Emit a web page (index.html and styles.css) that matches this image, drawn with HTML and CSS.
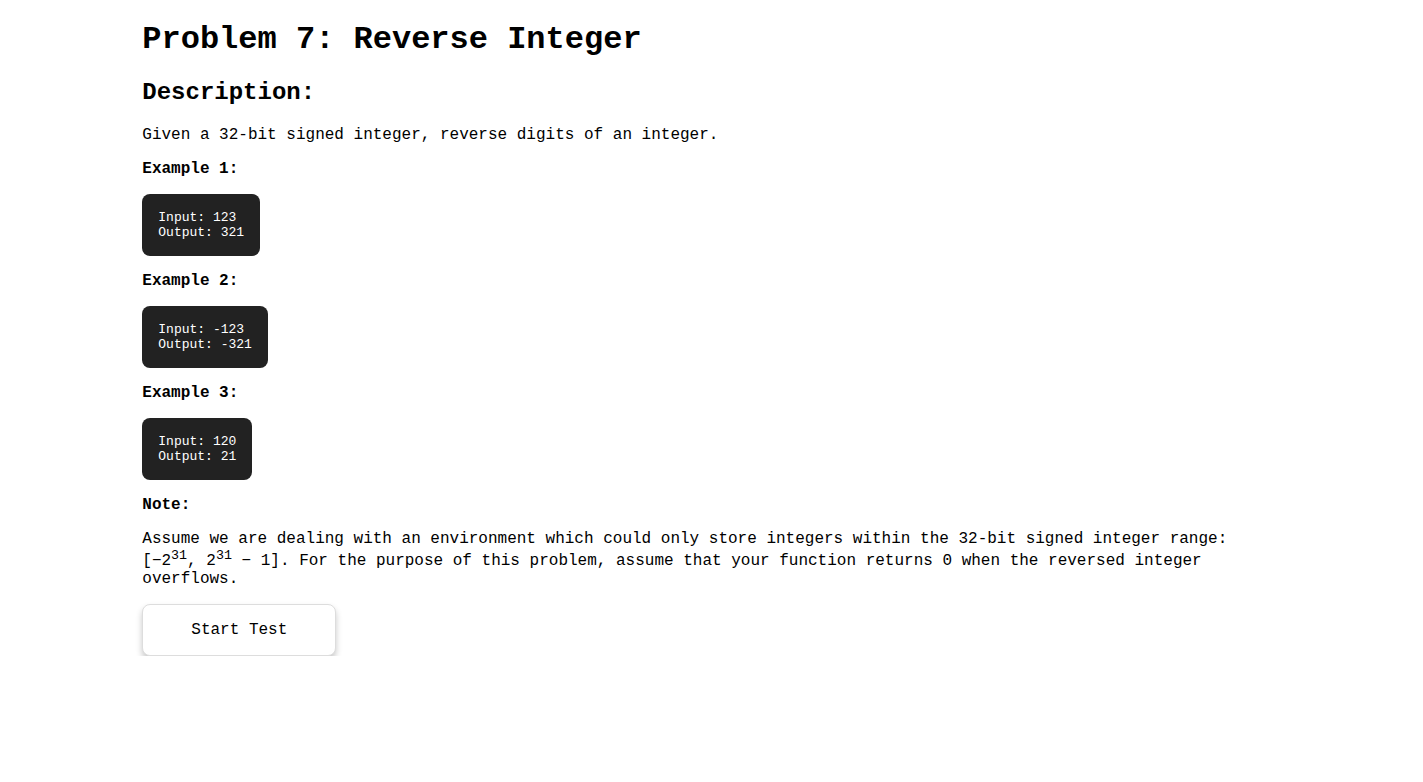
FILE: index.html
```html
<!DOCTYPE html>
<html lang="en">
<head>
<meta charset="utf-8">
<title>Problem 7: Reverse Integer</title>
<link rel="stylesheet" href="styles.css">
</head>
<body>
<main class="container">
  <h1 class="title">Problem 7: Reverse Integer</h1>
  <h2 class="section-title">Description:</h2>
  <p class="text">Given a 32-bit signed integer, reverse digits of an integer.</p>

  <p class="label">Example 1:</p>
  <pre class="example">Input: 123
Output: 321</pre>

  <p class="label">Example 2:</p>
  <pre class="example">Input: -123
Output: -321</pre>

  <p class="label">Example 3:</p>
  <pre class="example">Input: 120
Output: 21</pre>

  <p class="label">Note:</p>
  <p class="text">Assume we are dealing with an environment which could only store integers within the 32-bit signed integer range: [−2<sup>31</sup>, 2<sup>31</sup> − 1]. For the purpose of this problem, assume that your function returns 0 when the reversed integer overflows.</p>

  <button class="start-btn" type="button">Start Test</button>
</main>
</body>
</html>
```

FILE: styles.css
```css
html, body {
  margin: 0;
  padding: 0;
  background: #ffffff;
}

body {
  font-family: "Liberation Mono", "Courier New", monospace;
  font-size: 16px;
  color: #000000;
}

.container {
  width: 80%;
  margin: 0 auto;
}

.title {
  font-size: 32px;
  font-weight: bold;
  margin: 20.5px 0 21.44px;
}

.section-title {
  font-size: 24px;
  font-weight: bold;
  margin: 19.92px 0;
}

.text {
  margin: 16px 0;
}

.label {
  margin: 16px 0;
  font-weight: bold;
}

.example {
  display: block;
  width: fit-content;
  margin: 16px 0;
  padding: 16px;
  background: #222222;
  color: #ffffff;
  border-radius: 8px;
  font-family: "Liberation Mono", "Courier New", monospace;
  font-size: 13px;
  line-height: 15px;
}

.start-btn {
  display: block;
  padding: 16px 48px;
  font-family: "Liberation Mono", "Courier New", monospace;
  font-size: 16px;
  color: #000000;
  background: #ffffff;
  border: 1px solid #dddddd;
  border-radius: 8px;
  box-shadow: 0 4px 6px rgba(0, 0, 0, 0.22);
  cursor: pointer;
}
```
